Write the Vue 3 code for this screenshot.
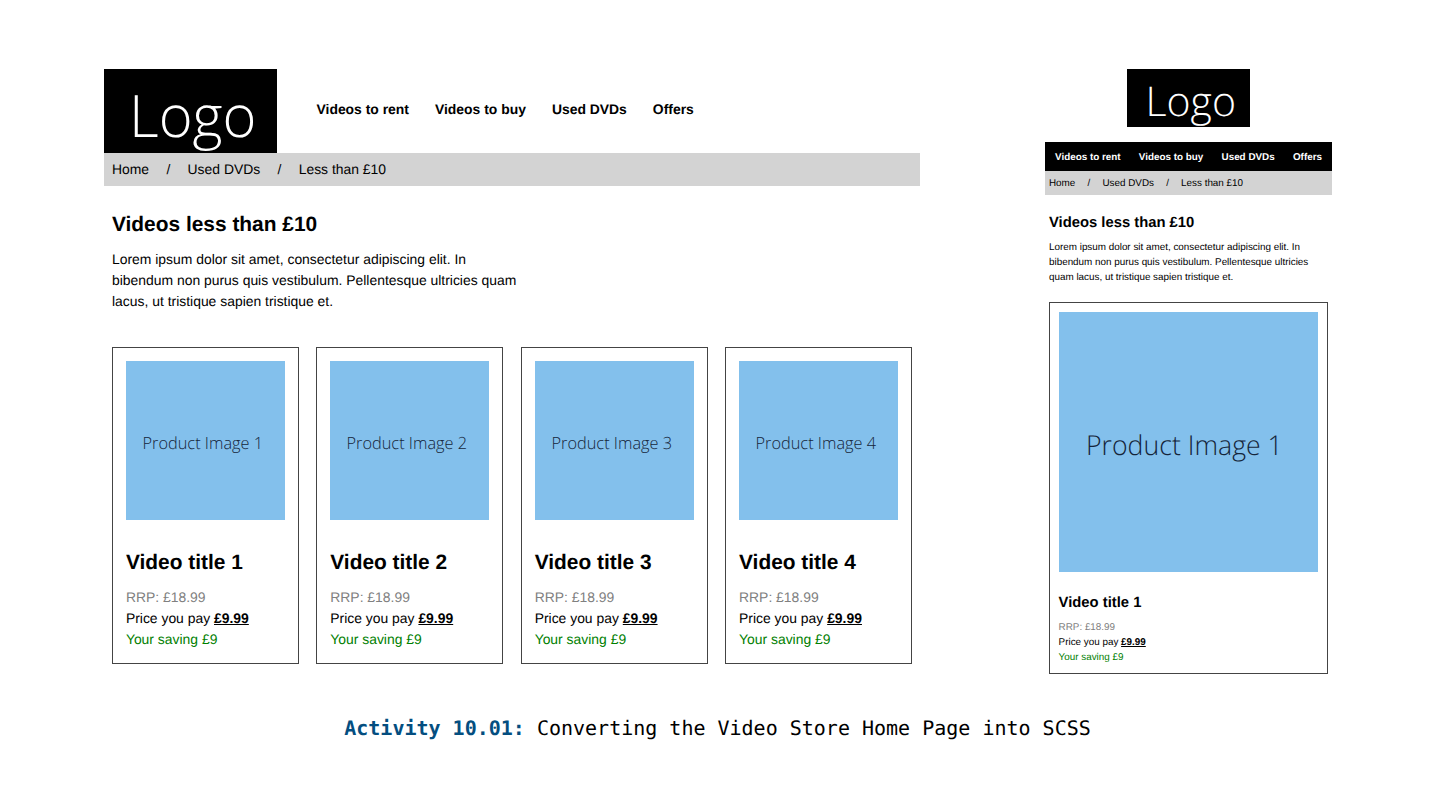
<script setup>
const navItems = ['Videos to rent', 'Videos to buy', 'Used DVDs', 'Offers']
const crumbs = ['Home', '/', 'Used DVDs', '/', 'Less than £10']
const views = [
  { kind: 'desktop', products: [1, 2, 3, 4] },
  { kind: 'mobile', products: [1] },
]
</script>

<template>
  <main class="slide">
    <div class="views">
      <section v-for="view in views" :key="view.kind" :class="['view', view.kind]">
        <header class="header">
          <svg v-if="view.kind === 'desktop'" class="logo" viewBox="0 0 173 84">
            <text x="25" y="68" font-size="58.5" textLength="127.5" lengthAdjust="spacingAndGlyphs">Logo</text>
          </svg>
          <svg v-else class="logo" viewBox="0 0 123 58">
            <text x="18.5" y="47" font-size="41" textLength="90.5" lengthAdjust="spacingAndGlyphs">Logo</text>
          </svg>
          <nav class="nav">
            <span v-for="item in navItems" :key="item">{{ item }}</span>
          </nav>
        </header>
        <div class="crumbs">
          <span v-for="(crumb, i) in crumbs" :key="i">{{ crumb }}</span>
        </div>
        <div class="content">
          <h1 class="title">Videos less than £10</h1>
          <p v-if="view.kind === 'desktop'" class="intro">
            Lorem ipsum dolor sit amet, consectetur adipiscing elit. In<br />
            bibendum non purus quis vestibulum. Pellentesque ultricies quam<br />
            lacus, ut tristique sapien tristique et.
          </p>
          <p v-else class="intro">
            Lorem ipsum dolor sit amet, consectetur adipiscing elit. In<br />
            bibendum non purus quis vestibulum. Pellentesque ultricies<br />
            quam lacus, ut tristique sapien tristique et.
          </p>
          <div class="cards">
            <article v-for="n in view.products" :key="n" class="card">
              <svg class="image" viewBox="0 0 260 260">
                <text x="27" y="143.5" font-size="27.5" textLength="197" lengthAdjust="spacingAndGlyphs">Product Image {{ n }}</text>
              </svg>
              <h2 class="title">Video title {{ n }}</h2>
              <p class="rrp">RRP: £18.99</p>
              <p>Price you pay <b>£9.99</b></p>
              <p class="saving">Your saving £9</p>
            </article>
          </div>
        </div>
      </section>
    </div>
    <p class="caption"><strong>Activity 10.01:</strong> Converting the Video Store Home Page into SCSS</p>
  </main>
</template>

<style>
body {
  margin: 0;
  background: #fff;
}
</style>

<style scoped>
.slide {
  box-sizing: border-box;
  width: 1446px;
  height: 790px;
  padding: 69px 114px 0 104px;
  overflow: hidden;
  color: #000;
  font-family: "Liberation Sans", Arial, sans-serif;
  text-rendering: geometricPrecision;
}
.views {
  display: flex;
  justify-content: space-between;
  align-items: flex-start;
  height: 647px;
}
p,
h1,
h2 {
  margin: 0;
}
.desktop {
  width: 816px;
  font-size: 13.92px;
  line-height: 21px;
}
.mobile {
  width: 287px;
  font-size: 9.87px;
  line-height: 15px;
}
.header {
  display: flex;
}
.logo {
  display: block;
  overflow: visible;
  background: #000;
}
.logo text {
  fill: #fff;
  font-family: "Open Sans", "Noto Sans", sans-serif;
  font-weight: 300;
}
.desktop .logo {
  width: 173px;
  height: 84px;
}
.nav {
  display: flex;
  font-weight: 700;
}
.desktop .nav {
  gap: 26px;
  padding: 30px 0 0 39.5px;
}
.mobile .header {
  flex-direction: column;
  align-items: center;
}
.mobile .logo {
  width: 123px;
  height: 58px;
}
.mobile .nav {
  box-sizing: border-box;
  width: 100%;
  height: 29px;
  margin-top: 15px;
  padding: 8px 10px 0;
  justify-content: space-between;
  background: #000;
  color: #fff;
}
.crumbs {
  display: flex;
  background: #d3d3d3;
}
.desktop .crumbs {
  height: 27px;
  gap: 17.3px;
  padding: 6px 8px 0;
}
.mobile .crumbs {
  height: 19px;
  gap: 12.2px;
  padding: 5px 4px 0;
}
.desktop .content {
  padding: 23px 8px 0;
}
.mobile .content {
  padding: 17px 4px 0;
}
.title {
  font-weight: 700;
}
.desktop .title {
  font-size: 20.9px;
  line-height: 32px;
  margin-bottom: 8px;
}
.mobile .title {
  font-size: 14.8px;
  line-height: 22px;
  margin-bottom: 6px;
}
.cards {
  display: flex;
}
.desktop .cards {
  gap: 17.5px;
  margin-top: 35px;
}
.mobile .cards {
  margin-top: 17.4px;
}
.card {
  box-sizing: border-box;
  flex: 1;
  border: 1px solid #444;
}
.desktop .card {
  height: 317px;
  padding: 13px 12.9px 0;
}
.mobile .card {
  height: 371.3px;
  padding: 9px 8.6px 0;
}
.image {
  display: block;
  width: 100%;
  aspect-ratio: 1;
  background: #83c0ec;
}
.image text {
  fill: #15253a;
  font-family: "Open Sans", "Noto Sans", sans-serif;
  font-weight: 300;
}
.desktop .card .title {
  margin: 27px 0 8px;
}
.mobile .card .title {
  margin: 19.4px 0 6px;
}
.rrp {
  color: #808080;
}
.saving {
  color: #008000;
}
.card b {
  text-decoration: underline;
}
.caption {
  padding-right: 1px;
  font-family: "DejaVu Sans Mono", monospace;
  font-size: 20px;
  line-height: 24px;
  text-align: center;
}
.caption strong {
  color: #044e80;
}
</style>
